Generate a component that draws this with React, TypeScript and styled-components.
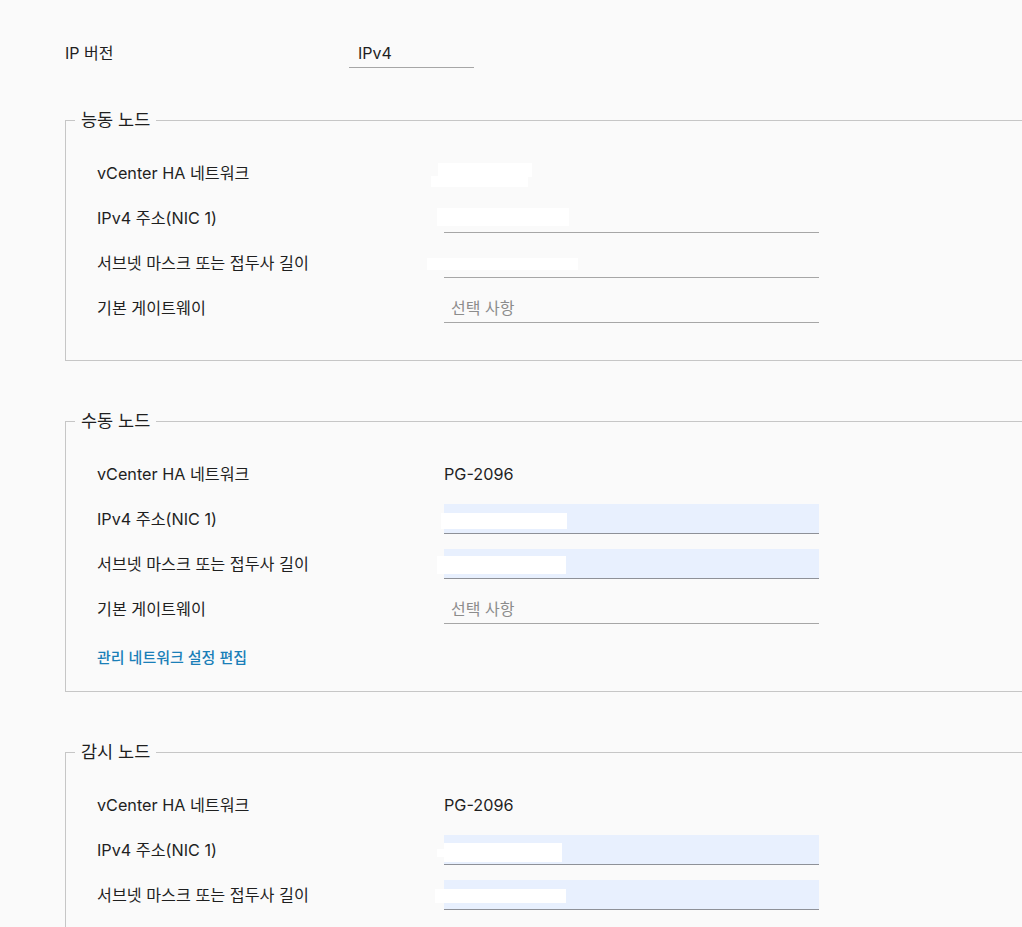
import React from "react";
import styled, { createGlobalStyle } from "styled-components";

const Global = createGlobalStyle`
  html, body { margin: 0; padding: 0; background: #fafafa; overflow: hidden; }
  body { font-family: Inter, "Noto Sans CJK KR", sans-serif; color: #1f1f1f; }
`;

const Page = styled.div`
  width: 1100px;
  padding: 38px 0 0 65px;
  box-sizing: border-box;
`;

const TopRow = styled.div`
  display: grid;
  grid-template-columns: 284px 125px;
  align-items: center;
  height: 30px;
`;

const TopLabel = styled.div`
  font-size: 16px;
  line-height: 30px;
`;

const Select = styled.div`
  height: 30px;
  box-sizing: border-box;
  border-bottom: 1px solid #a6a6a6;
  padding-left: 9px;
  font-size: 16px;
  line-height: 30px;
`;

const Group = styled.fieldset<{ $top: number; $bottom: number }>`
  margin: ${(p) => p.$top}px 0 0 0;
  padding: 27px 0 ${(p) => p.$bottom}px 31px;
  border: 1px solid #c6c6c6;
  border-right: none;
  min-width: 0;
`;

const Legend = styled.legend`
  margin-left: -22px;
  padding: 0 6px;
  height: 22px;
  font-size: 17.5px;
  line-height: 22px;
  color: #1f1f1f;
`;

const Rows = styled.div`
  display: flex;
  flex-direction: column;
  gap: 15px;
`;

const Row = styled.div`
  display: grid;
  grid-template-columns: 347px 375px;
  align-items: center;
  height: 30px;
`;

const Label = styled.div`
  font-size: 16.2px;
  line-height: 30px;
`;

const Cell = styled.div`
  position: relative;
  height: 30px;
`;

const Value = styled.div`
  font-size: 16.2px;
  line-height: 30px;
`;

const Input = styled.input<{ $filled?: boolean }>`
  display: block;
  width: 100%;
  height: 30px;
  box-sizing: border-box;
  margin: 0;
  padding: 0 7px;
  border: none;
  border-bottom: 1px solid ${(p) => (p.$filled ? "#8e9198" : "#a6a6a6")};
  background: ${(p) => (p.$filled ? "#e8f0fe" : "transparent")};
  font-family: inherit;
  font-size: 16px;
  color: #1f1f1f;
  outline: none;
  &::placeholder { color: #8c8c8c; }
`;

const Redact = styled.span.attrs<{ $x: number; $y: number; $w: number; $h: number }>((p) => ({
  style: { left: p.$x, top: p.$y, width: p.$w, height: p.$h },
}))<{ $x: number; $y: number; $w: number; $h: number }>`
  position: absolute;
  background: #ffffff;
`;

const Link = styled.a`
  display: block;
  margin-top: 24px;
  font-size: 15px;
  font-weight: 500;
  line-height: 20px;
  color: #1a7fb8;
  text-decoration: none;
  cursor: pointer;
`;

type Box = [number, number, number, number];

const Boxes = ({ boxes }: { boxes: Box[] }) => (
  <>
    {boxes.map(([x, y, w, h], i) => (
      <Redact key={i} $x={x} $y={y} $w={w} $h={h} />
    ))}
  </>
);

export default function App() {
  return (
    <>
      <Global />
      <Page>
        <TopRow>
          <TopLabel>IP 버전</TopLabel>
          <Select>IPv4</Select>
        </TopRow>

        <Group $top={41} $bottom={37}>
          <Legend>능동 노드</Legend>
          <Rows>
            <Row>
              <Label>vCenter HA 네트워크</Label>
              <Cell>
                <Boxes boxes={[[-6, 5, 94, 14], [-13, 18, 97, 11]]} />
              </Cell>
            </Row>
            <Row>
              <Label>IPv4 주소(NIC 1)</Label>
              <Cell>
                <Input readOnly />
                <Boxes boxes={[[-7, 5, 132, 18]]} />
              </Cell>
            </Row>
            <Row>
              <Label>서브넷 마스크 또는 접두사 길이</Label>
              <Cell>
                <Input readOnly />
                <Boxes boxes={[[-17, 10, 151, 12]]} />
              </Cell>
            </Row>
            <Row>
              <Label>기본 게이트웨이</Label>
              <Cell>
                <Input readOnly placeholder="선택 사항" />
              </Cell>
            </Row>
          </Rows>
        </Group>

        <Group $top={49} $bottom={23}>
          <Legend>수동 노드</Legend>
          <Rows>
            <Row>
              <Label>vCenter HA 네트워크</Label>
              <Value>PG-2096</Value>
            </Row>
            <Row>
              <Label>IPv4 주소(NIC 1)</Label>
              <Cell>
                <Input readOnly $filled />
                <Boxes boxes={[[-3, 9, 126, 16]]} />
              </Cell>
            </Row>
            <Row>
              <Label>서브넷 마스크 또는 접두사 길이</Label>
              <Cell>
                <Input readOnly $filled />
                <Boxes boxes={[[-7, 7, 129, 18]]} />
              </Cell>
            </Row>
            <Row>
              <Label>기본 게이트웨이</Label>
              <Cell>
                <Input readOnly placeholder="선택 사항" />
              </Cell>
            </Row>
          </Rows>
          <Link>관리 네트워크 설정 편집</Link>
        </Group>

        <Group $top={49} $bottom={37}>
          <Legend>감시 노드</Legend>
          <Rows>
            <Row>
              <Label>vCenter HA 네트워크</Label>
              <Value>PG-2096</Value>
            </Row>
            <Row>
              <Label>IPv4 주소(NIC 1)</Label>
              <Cell>
                <Input readOnly $filled />
                <Boxes boxes={[[0, 8, 118, 19], [-7, 14, 7, 8]]} />
              </Cell>
            </Row>
            <Row>
              <Label>서브넷 마스크 또는 접두사 길이</Label>
              <Cell>
                <Input readOnly $filled />
                <Boxes boxes={[[-9, 9, 131, 14]]} />
              </Cell>
            </Row>
            <Row>
              <Label>기본 게이트웨이</Label>
              <Cell>
                <Input readOnly placeholder="선택 사항" />
              </Cell>
            </Row>
          </Rows>
        </Group>
      </Page>
    </>
  );
}
